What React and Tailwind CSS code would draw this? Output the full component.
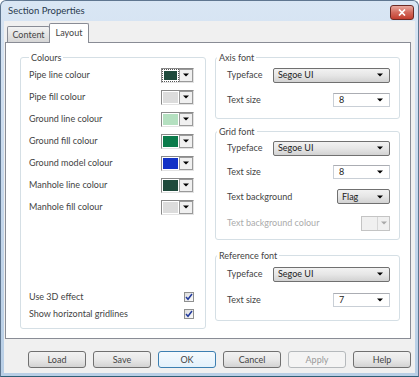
import React from 'react';

const font = "font-['Lato','Liberation_Sans',Arial,sans-serif]";

function Arrow({ color = '#000' }) {
  return (
    <svg width="6" height="4" viewBox="0 0 6 4">
      <path d="M0 0.5h6L3 3.5z" fill={color} />
    </svg>
  );
}

function Swatch({ color, focused }) {
  return (
    <div className="flex h-[15px] w-[33px] border-t border-l border-[#8a8a8a] border-b border-r border-b-[#e3e3e3] border-r-[#e3e3e3] bg-white">
      <div className={`flex-1 p-[1px] ${focused ? 'border border-dotted border-[#555]' : ''}`}>
        <div className="h-full w-full" style={{ background: color }} />
      </div>
      <div className="flex w-[14px] items-center justify-center border border-[#9a9a9a] bg-[#f0f0f0]">
        <Arrow />
      </div>
    </div>
  );
}

function Check() {
  return (
    <div className="flex h-[10px] w-[10px] items-center justify-center border border-[#8e8f8f] bg-gradient-to-br from-[#dcdcdc] to-[#fbfbfb]">
      <svg width="8" height="8" viewBox="0 0 8 8">
        <path d="M1 4l2 2.3L7 1" stroke="#21399b" strokeWidth="1.5" fill="none" />
      </svg>
    </div>
  );
}

function DropList({ value, width }) {
  return (
    <div className={`flex h-[15px] items-center justify-between rounded-[2px] border border-[#707070] bg-gradient-to-b from-[#f2f2f2] via-[#e6e6e6] to-[#d2d2d2] pl-[4px] pr-[6px] text-[#222] ${width}`}>
      <span>{value}</span>
      <Arrow />
    </div>
  );
}

function Combo({ value }) {
  return (
    <div className="flex h-[14px] w-[57px] items-center justify-between border border-[#c9cfd6] border-t-[#abadb3] bg-white pl-[5px] pr-[6px] text-[#222]">
      <span>{value}</span>
      <Arrow />
    </div>
  );
}

function Group({ title, legendPos, className, children }) {
  return (
    <fieldset className={`rounded-[3px] border border-[#d5dfe5] ${className}`}>
      <legend className={`${legendPos} px-[2px] leading-[11px]`}>{title}</legend>
      {children}
    </fieldset>
  );
}

function Btn({ label, kind }) {
  const style =
    kind === 'default'
      ? 'border-[#3c7fb1] bg-gradient-to-b from-[#f4fafe] to-[#e3f1fb]'
      : kind === 'disabled'
      ? 'border-[#b5b9bc] bg-[#f4f4f4] text-[#9a9a9a]'
      : 'border-[#707070] bg-gradient-to-b from-[#f2f2f2] via-[#e8e8e8] to-[#d3d3d3]';
  return (
    <div className={`flex h-[17px] w-[58px] items-center justify-center rounded-[3px] border ${style}`}>
      {label}
    </div>
  );
}

const colours = [
  ['Pipe line colour', '#1f4a3c', true],
  ['Pipe fill colour', '#dcdcdc'],
  ['Ground line colour', '#b4e0c0'],
  ['Ground fill colour', '#0b7b4b'],
  ['Ground model colour', '#1232c6'],
  ['Manhole line colour', '#1f4a3c'],
  ['Manhole fill colour', '#dcdcdc'],
];

export default function App() {
  return (
    <div className={`${font} flex h-[377px] w-[419px] flex-col rounded-t-[6px] border border-[#5f7690] border-b-[#2e5f76] bg-gradient-to-b from-[#d9e6f4] via-[#c6d8ec] to-[#b9cfe6] text-[9px] text-[#444]`}>
      {/* Title bar */}
      <div className="flex h-[20px] items-center justify-between pl-[7px] pr-[4px]">
        <span className="text-[9.5px] text-[#2a3a4e]">Section Properties</span>
        <div className="mt-[2px] flex h-[15px] w-[24px] items-center justify-center rounded-[3px] border border-[#6b2a24] bg-gradient-to-b from-[#e9a99f] via-[#d2695c] to-[#c23d2e]">
          <svg width="8" height="7" viewBox="0 0 8 7">
            <path d="M1 0.5l6 6M7 0.5l-6 6" stroke="#fff" strokeWidth="1.7" />
          </svg>
        </div>
      </div>

      {/* Body */}
      <div className="mx-[3px] mb-[3px] flex flex-1 flex-col bg-[#f0f0f0]">
        {/* Tabs */}
        <div className="flex h-[21px] items-end pl-[3px]">
          <div className="flex h-[16px] w-[43px] items-center justify-center rounded-t-[2px] border border-b-0 border-[#898c95] bg-gradient-to-b from-[#f3f3f3] to-[#d6d6d6]">
            Content
          </div>
          <div className="relative z-10 -mb-px -ml-px flex h-[20px] w-[40px] items-start justify-center rounded-t-[2px] border border-b-0 border-[#898c95] bg-white pt-[2px]">
            Layout
          </div>
        </div>

        {/* Panel */}
        <div className="ml-[1px] flex h-[297px] w-[406px] gap-[9px] border border-[#898c95] bg-white pl-[14px] pt-[9px]">
          <Group title="Colours" legendPos="ml-0" className="flex h-[277px] w-[186px] flex-col pb-[6px] pl-[8px] pr-[11px]">
            <div className="mt-[1px] flex flex-col">
              {colours.map(([label, c, f]) => (
                <div key={label} className="flex h-[22px] items-center justify-between">
                  <span>{label}</span>
                  <Swatch color={c} focused={f} />
                </div>
              ))}
            </div>
            <div className="mt-auto flex flex-col">
              <div className="flex h-[17px] items-center justify-between">
                <span>Use 3D effect</span>
                <Check />
              </div>
              <div className="flex h-[17px] items-center justify-between">
                <span>Show horizontal gridlines</span>
                <Check />
              </div>
            </div>
          </Group>

          <div className="flex w-[185px] flex-col">
            <Group title="Axis font" legendPos="-ml-[10px]" className="pb-[6px] pl-[11px] pr-[9px]">
              <div className="flex h-[24px] items-center justify-between">
                <span>Typeface</span>
                <DropList value="Segoe UI" width="w-[117px]" />
              </div>
              <div className="flex h-[25px] items-center justify-between">
                <span>Text size</span>
                <Combo value="8" />
              </div>
            </Group>

            <Group title="Grid font" legendPos="-ml-[10px]" className="mt-[7px] pb-[2px] pl-[11px] pr-[9px]">
              <div className="flex h-[22px] items-center justify-between">
                <span>Typeface</span>
                <DropList value="Segoe UI" width="w-[117px]" />
              </div>
              <div className="flex h-[25px] items-center justify-between">
                <span>Text size</span>
                <Combo value="8" />
              </div>
              <div className="flex h-[25px] items-center justify-between">
                <span>Text background</span>
                <DropList value="Flag" width="w-[53px]" />
              </div>
              <div className="flex h-[28px] items-center justify-between text-[#ababab]">
                <span>Text background colour</span>
                <div className="flex h-[15px] w-[29px] border border-[#c4c4c4] bg-[#f0f0f0]">
                  <div className="flex-1" />
                  <div className="flex w-[12px] items-center justify-center border-l border-[#d6d6d6]">
                    <Arrow color="#a8a8a8" />
                  </div>
                </div>
              </div>
            </Group>

            <Group title="Reference font" legendPos="-ml-[10px]" className="mt-[10px] pb-[8px] pl-[11px] pr-[9px]">
              <div className="flex h-[26px] items-center justify-between">
                <span>Typeface</span>
                <DropList value="Segoe UI" width="w-[117px]" />
              </div>
              <div className="flex h-[25px] items-center justify-between">
                <span>Text size</span>
                <Combo value="7" />
              </div>
            </Group>
          </div>
        </div>

        {/* Buttons */}
        <div className="mt-[12px] flex justify-end gap-[7px] pr-[4px]">
          <Btn label="Load" />
          <Btn label="Save" />
          <Btn label="OK" kind="default" />
          <Btn label="Cancel" />
          <Btn label="Apply" kind="disabled" />
          <Btn label="Help" />
        </div>
      </div>
    </div>
  );
}
